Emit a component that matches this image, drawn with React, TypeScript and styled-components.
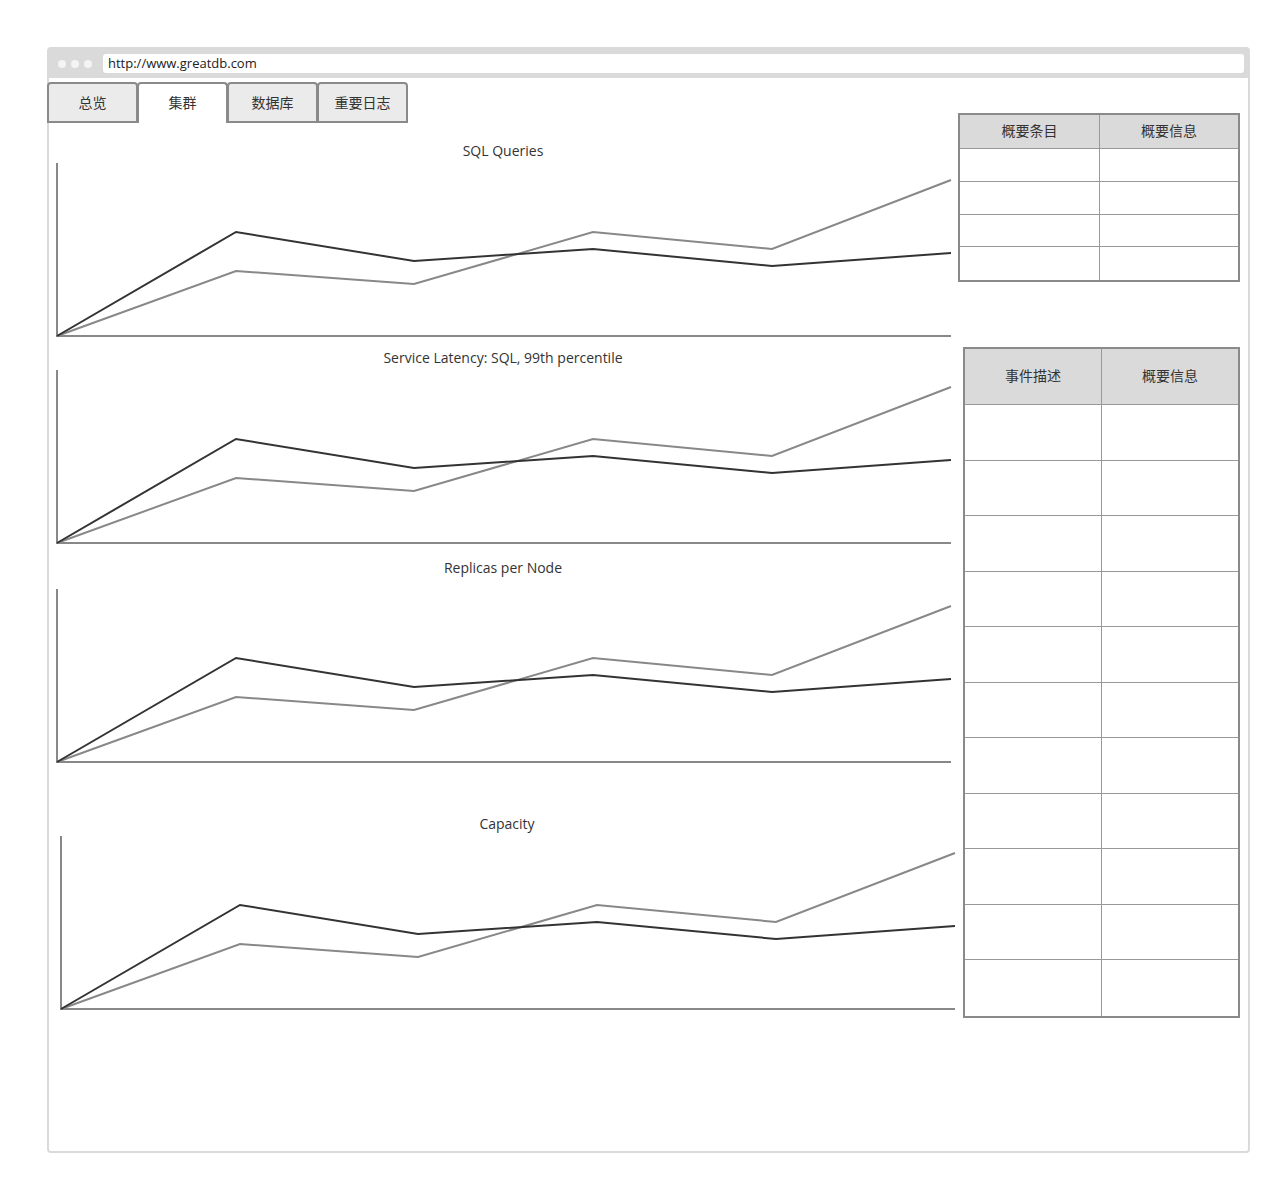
import React from "react";
import styled, { createGlobalStyle } from "styled-components";

const GlobalStyle = createGlobalStyle`
  html, body {
    margin: 0;
    padding: 0;
    background: #ffffff;
  }
  body {
    font-family: "Open Sans", "Noto Sans CJK SC", sans-serif;
    color: #333333;
  }
`;

type Pt = [number, number];

const X = [8, 187, 365, 544, 723, 902];
const DARK = [175, 71, 100, 88, 105, 92];
const LIGHT = [175, 110, 123, 71, 88, 19];

const toPoints = (ys: number[]) =>
  ys.map((y, i): Pt => [X[i], y]).map((p) => p.join(",")).join(" ");

const charts = [
  { title: "SQL Queries", top: 18, gap: 0, shift: 0 },
  { title: "Service Latency: SQL, 99th percentile", top: 11, gap: 0, shift: 0 },
  { title: "Replicas per Node", top: 14, gap: 9, shift: 0 },
  { title: "Capacity", top: 51, gap: 0, shift: 4 },
];

const tabs = ["总览", "集群", "数据库", "重要日志"];

const LineChart = ({ title, top, gap, shift }: { title: string; top: number; gap: number; shift: number }) => (
  <ChartBlock $top={top} $shift={shift}>
    <ChartTitle $gap={gap}>{title}</ChartTitle>
    <svg width="908" height="176" viewBox="0 0 908 176">
      <line x1="8" y1="2" x2="8" y2="176" stroke="#888" strokeWidth="2" />
      <line x1="7" y1="175" x2="902" y2="175" stroke="#888" strokeWidth="2" />
      <polyline points={toPoints(LIGHT)} fill="none" stroke="#888" strokeWidth="2" strokeLinejoin="miter" />
      <polyline points={toPoints(DARK)} fill="none" stroke="#333" strokeWidth="2" strokeLinejoin="miter" />
    </svg>
  </ChartBlock>
);

const InfoTable = ({
  heads,
  rows,
  headH,
  rowH,
  split,
  width,
  top,
  left,
}: {
  heads: string[];
  rows: number;
  headH: number;
  rowH: number;
  split: number;
  width: number;
  top: number;
  left: number;
}) => (
  <TableBox $width={width} $top={top} $left={left}>
    <HeadRow $h={headH} $split={split}>
      {heads.map((h) => (
        <HeadCell key={h}>{h}</HeadCell>
      ))}
    </HeadRow>
    {Array.from({ length: rows }).map((_, i) => (
      <BodyRow key={i} $h={rowH} $split={split} $last={i === rows - 1}>
        <BodyCell />
        <BodyCell />
      </BodyRow>
    ))}
  </TableBox>
);

const App = () => {
  return (
    <>
      <GlobalStyle />
      <Frame>
        <TopBar>
          <Dots>
            <Dot />
            <Dot />
            <Dot />
          </Dots>
          <Url>http://www.greatdb.com</Url>
        </TopBar>
        <Body>
          <LeftCol>
            <Tabs>
              {tabs.map((t, i) => (
                <Tab key={t} $active={i === 1}>
                  {t}
                </Tab>
              ))}
            </Tabs>
            {charts.map((c) => (
              <LineChart key={c.title} {...c} />
            ))}
          </LeftCol>
          <RightCol>
            <InfoTable heads={["概要条目", "概要信息"]} rows={4} headH={34} rowH={32.8} split={140} width={282} top={0} left={0} />
            <InfoTable heads={["事件描述", "概要信息"]} rows={11} headH={56} rowH={55.5} split={137} width={277} top={65} left={5} />
          </RightCol>
        </Body>
      </Frame>
    </>
  );
};

export default App;

const Frame = styled.div`
  box-sizing: border-box;
  width: 1203px;
  height: 1106px;
  margin: 47px 0 0 47px;
  border: 2px solid #dadada;
  border-radius: 4px;
  background: #ffffff;
  display: flex;
  flex-direction: column;
`;

const TopBar = styled.div`
  display: flex;
  align-items: center;
  height: 29px;
  padding: 0 4px 0 9px;
  background: #dadada;
`;

const Dots = styled.div`
  display: flex;
  gap: 5px;
  margin-right: 11px;
`;

const Dot = styled.span`
  width: 8px;
  height: 8px;
  border-radius: 50%;
  background: #f4f4f4;
`;

const Url = styled.div`
  flex: 1;
  height: 19px;
  line-height: 18px;
  padding-left: 5px;
  border-radius: 3px;
  background: #ffffff;
  font-size: 13px;
  color: #222222;
`;

const Body = styled.div`
  display: flex;
  flex-direction: row;
  flex: 1;
`;

const LeftCol = styled.div`
  flex: 1;
  min-width: 0;
  display: flex;
  flex-direction: column;
`;

const Tabs = styled.div`
  display: flex;
  margin: 4px 0 0 -2px;
`;

const Tab = styled.div<{ $active: boolean }>`
  box-sizing: border-box;
  width: 91px;
  height: 41px;
  display: flex;
  align-items: center;
  justify-content: center;
  font-size: 14px;
  color: #333333;
  border: 2px solid #8a8a8a;
  border-bottom: ${(p) => (p.$active ? "none" : "2px solid #8a8a8a")};
  border-radius: 4px 4px 0 0;
  background: ${(p) => (p.$active ? "#ffffff" : "#ebebeb")};
  padding-bottom: ${(p) => (p.$active ? "4px" : "2px")};
  & + & {
    margin-left: -1px;
  }
`;

const ChartBlock = styled.div<{ $top: number; $shift: number }>`
  display: flex;
  flex-direction: column;
  align-items: center;
  flex-shrink: 0;
  width: 908px;
  margin-top: ${(p) => p.$top}px;
  margin-left: ${(p) => p.$shift}px;
  svg {
    display: block;
  }
`;

const ChartTitle = styled.div<{ $gap: number }>`
  height: 20px;
  line-height: 20px;
  font-size: 14px;
  color: #333333;
  margin-bottom: ${(p) => p.$gap}px;
`;

const RightCol = styled.div`
  flex-shrink: 0;
  width: 282px;
  padding: 35px 8px 0 0;
  display: flex;
  flex-direction: column;
`;

const TableBox = styled.div<{ $width: number; $top: number; $left: number }>`
  box-sizing: border-box;
  width: ${(p) => p.$width}px;
  margin-top: ${(p) => p.$top}px;
  margin-left: ${(p) => p.$left}px;
  border: 2px solid #8a8a8a;
  background: #ffffff;
`;

const HeadRow = styled.div<{ $h: number; $split: number }>`
  box-sizing: border-box;
  display: grid;
  grid-template-columns: ${(p) => p.$split}px 1fr;
  height: ${(p) => p.$h}px;
  background: #dadada;
  border-bottom: 1px solid #999999;
`;

const HeadCell = styled.div`
  display: flex;
  align-items: center;
  justify-content: center;
  font-size: 14px;
  color: #333333;
  padding-bottom: 3px;
  &:first-child {
    border-right: 1px solid #999999;
  }
`;

const BodyRow = styled.div<{ $h: number; $split: number; $last: boolean }>`
  box-sizing: border-box;
  display: grid;
  grid-template-columns: ${(p) => p.$split}px 1fr;
  height: ${(p) => p.$h}px;
  border-bottom: ${(p) => (p.$last ? "none" : "1px solid #999999")};
`;

const BodyCell = styled.div`
  &:first-child {
    border-right: 1px solid #999999;
  }
`;
